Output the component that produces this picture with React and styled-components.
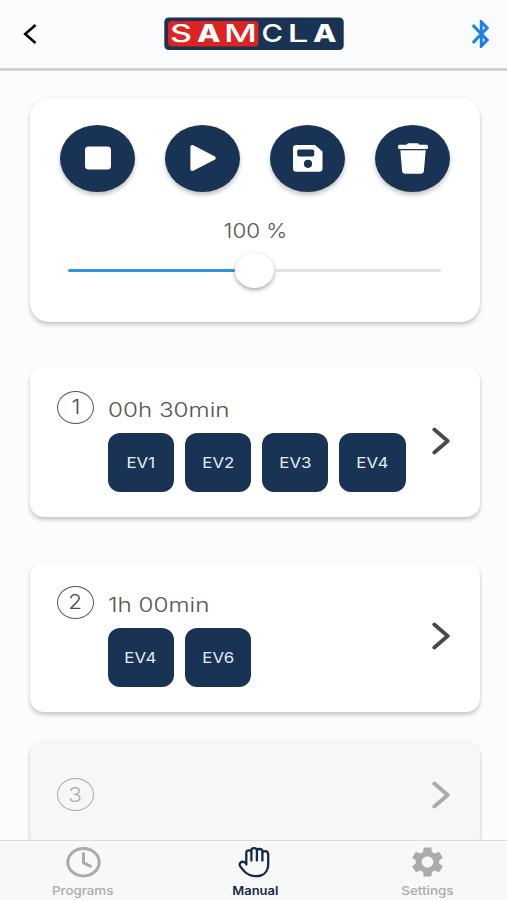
import styled, { createGlobalStyle } from "styled-components"
import { MdSettings } from "react-icons/md"

const programs = [
    { id: 1, time: "00h 30min", valves: ["EV1", "EV2", "EV3", "EV4"] },
    { id: 2, time: "1h 00min", valves: ["EV4", "EV6"] },
    { id: 3, valves: [] },
]

export default function App() {
    return (
        <PageContainer>
            <GlobalStyle />
            <Header>
                <BackIcon />
                <Logo />
                <BluetoothIcon />
            </Header>

            <Content>
                <ControlsCard>
                    <ButtonsContainer>
                        <RoundButton aria-label="stop"><StopIcon /></RoundButton>
                        <RoundButton aria-label="play"><PlayIcon /></RoundButton>
                        <RoundButton aria-label="save"><SaveIcon /></RoundButton>
                        <RoundButton aria-label="delete"><TrashIcon /></RoundButton>
                    </ButtonsContainer>
                    <Percentage><Wide $x={1.12}>100 %</Wide></Percentage>
                    <Slider>
                        <Track $filled />
                        <Thumb />
                        <Track />
                    </Slider>
                </ControlsCard>

                {programs.map(program => <ProgramCard key={program.id} program={program} />)}
            </Content>

            <TabBar>
                <Tab>
                    <ClockIcon />
                    <Wide $x={1.11}>Programs</Wide>
                </Tab>
                <Tab $active>
                    <HandIcon />
                    <Wide $x={1.08}>Manual</Wide>
                </Tab>
                <Tab>
                    <MdSettings preserveAspectRatio="none" />
                    <Wide $x={1.12}>Settings</Wide>
                </Tab>
            </TabBar>
        </PageContainer>
    )
}

function ProgramCard({ program }) {
    const empty = program.valves.length === 0
    return (
        <Card $empty={empty}>
            <Number $empty={empty}><Wide $x={1.12}>{program.id}</Wide></Number>
            <ProgramInfo>
                {program.time && <Time><Wide $x={1.21} $left>{program.time}</Wide></Time>}
                <Valves>
                    {program.valves.map(valve => (
                        <Valve key={valve}><Wide $x={1.12}>{valve}</Wide></Valve>
                    ))}
                </Valves>
            </ProgramInfo>
            <ArrowIcon />
        </Card>
    )
}

function BackIcon() {
    return (
        <svg width="14" height="20" viewBox="0 0 14 20" fill="none" stroke="#000" strokeWidth="2.5">
            <path d="M12.5 1 2.2 10l10.3 9" />
        </svg>
    )
}

function Logo() {
    return (
        <svg width="180" height="34" viewBox="0 0 180 34">
            <rect x="0.3" y="0.5" width="179.4" height="32.6" rx="4.5" fill="#183354" />
            <rect x="4" y="4" width="90.5" height="25.5" rx="4" fill="#dc231f" />
            <LogoLetters>
                <text x="6" y="25" textLength="22" lengthAdjust="spacingAndGlyphs">S</text>
                <LogoA x="33" y="25" textLength="23.5" lengthAdjust="spacingAndGlyphs">A</LogoA>
                <text x="60" y="25" textLength="33" lengthAdjust="spacingAndGlyphs">M</text>
                <text x="97.5" y="25" textLength="21.5" lengthAdjust="spacingAndGlyphs">C</text>
                <text x="123.5" y="25" textLength="21" lengthAdjust="spacingAndGlyphs">L</text>
                <LogoA x="149" y="25" textLength="23.5" lengthAdjust="spacingAndGlyphs">A</LogoA>
            </LogoLetters>
        </svg>
    )
}

function BluetoothIcon() {
    return (
        <svg width="17" height="28" viewBox="5 2 12.71 20" preserveAspectRatio="none" fill="#1b7fe3" stroke="#1b7fe3" strokeWidth="0.3">
            <path d="M17.71 7.71 12 2h-1v7.59L6.41 5 5 6.41 10.59 12 5 17.59 6.41 19 11 14.41V22h1l5.71-5.71-4.3-4.29 4.3-4.29zM13 5.83l1.88 1.88L13 9.59V5.83zm1.88 10.46L13 18.17v-3.76l1.88 1.88z" />
        </svg>
    )
}

function StopIcon() {
    return (
        <svg width="26" height="24" viewBox="0 0 26 24">
            <rect y="0.5" width="26" height="23" rx="3.5" fill="#fff" />
        </svg>
    )
}

function PlayIcon() {
    return (
        <svg width="26" height="28" viewBox="0 0 26 28" fill="#fff" stroke="#fff" strokeWidth="4" strokeLinejoin="round">
            <path d="M2.4 3v22L23.6 14z" />
        </svg>
    )
}

function SaveIcon() {
    return (
        <svg width="30" height="27" viewBox="0 0 30 27">
            <path d="M3.5 0H22l7.5 6.5v17a3.4 3.4 0 0 1-3.5 3.3H3.5A3.4 3.4 0 0 1 0 23.5v-20A3.4 3.4 0 0 1 3.5 0z" fill="#fff" />
            <rect x="4.2" y="4.5" width="17" height="7" rx="1.8" fill="#183354" />
            <circle cx="15" cy="18.8" r="4.1" fill="#183354" />
        </svg>
    )
}

function TrashIcon() {
    return (
        <svg width="30" height="31" viewBox="0 0 30 31" fill="#fff">
            <path d="M8.5 1.8Q9 0.2 10.8 0.2H19.2Q21 0.2 21.5 1.8H28.5Q30 1.8 30 3.3V4.4Q30 5.9 28.5 5.9H1.5Q0 5.9 0 4.4V3.3Q0 1.8 1.5 1.8Z" />
            <path d="M2.3 7.3H27.7L25.9 28.3Q25.6 30.7 23.2 30.7H6.8Q4.4 30.7 4.1 28.3Z" />
        </svg>
    )
}

function ArrowIcon() {
    return (
        <svg width="18" height="28" viewBox="0 0 18 28" fill="none" stroke="currentColor" strokeWidth="3.8" strokeLinecap="round" strokeLinejoin="round">
            <path d="M2.3 2.5 15.7 14 2.3 25.5" />
        </svg>
    )
}

function ClockIcon() {
    return (
        <svg viewBox="0 0 39 36" fill="none" stroke="currentColor" strokeWidth="3" strokeLinecap="round" strokeLinejoin="round">
            <ellipse cx="19.5" cy="18.2" rx="15.7" ry="13.7" />
            <path d="M19.5 9.5v9.3l6.8 3.3" />
        </svg>
    )
}

function HandIcon() {
    return (
        <svg viewBox="0 0 39 36" fill="none" stroke="currentColor" strokeWidth="2.3" strokeLinecap="round" strokeLinejoin="round">
            <path d="M10.3 20.5V8.8Q10.3 6.3 12.8 6.3T15.4 8.5V16.5M15.4 8V6.3Q15.4 4.2 18.1 4.2T20.9 6.3V16.5M20.9 7Q20.9 5 23.6 5T26.4 7.5V16.5M26.4 9Q26.8 7.2 29.3 7.2T32.2 10V19.5C32.2 27.5 27.5 32.2 20.2 32.2 14.5 32.2 11.5 30.5 8.5 27.5L4.3 22.5C2.5 19.5 5 17 8 18L10.3 19.5" />
        </svg>
    )
}

const GlobalStyle = createGlobalStyle`
    * {
        box-sizing: border-box;
    }
    body {
        margin: 0;
        background-color: #fbfcfe;
        font-family: Inter, 'Liberation Sans', sans-serif;
    }
`
const PageContainer = styled.div`
    display: flex;
    flex-direction: column;
    height: 900px;
    overflow: hidden;
`
const Header = styled.header`
    display: flex;
    justify-content: space-between;
    align-items: center;
    height: 71px;
    flex-shrink: 0;
    padding: 0 18.5px 1px 22.5px;
    border-bottom: 3px solid #d3d5d8;
`
const LogoLetters = styled.g`
    fill: #fff;
    font-family: Inter, sans-serif;
    font-size: 24px;
    font-weight: 500;
`
const LogoA = styled.text`
    font-weight: 800;
`
const Content = styled.main`
    flex: 1;
    min-height: 0;
    overflow: hidden;
    padding: 27px 27px 0 30px;
`
const ControlsCard = styled.section`
    display: flex;
    flex-direction: column;
    height: 224px;
    padding: 26.5px 30px 0;
    border-radius: 19px;
    background-color: #fff;
    box-shadow: 0 3px 4px rgba(0, 0, 0, 0.2), 0 0 3px rgba(0, 0, 0, 0.06);
`
const ButtonsContainer = styled.div`
    display: flex;
    justify-content: space-between;
`
const RoundButton = styled.button`
    display: flex;
    align-items: center;
    justify-content: center;
    width: 75px;
    height: 67px;
    padding: 0;
    border: none;
    border-radius: 50%;
    background-color: #183354;
    box-shadow: 0 3px 4px rgba(0, 0, 0, 0.24);
`
const Wide = styled.span`
    display: inline-block;
    white-space: nowrap;
    transform: scaleX(${props => props.$x});
    transform-origin: ${props => props.$left ? "left" : "center"};
`
const Percentage = styled.div`
    margin-top: 26px;
    line-height: 26px;
    font-size: 20px;
    font-weight: 300;
    text-align: center;
    color: #555;
`
const Slider = styled.div`
    display: flex;
    align-items: center;
    margin: 9.5px 9px 0 8px;
`
const Track = styled.div`
    flex: 1;
    height: 3px;
    border-radius: 2px;
    background-color: ${props => props.$filled ? "#3094dc" : "#e2e2e2"};
`
const Thumb = styled.div`
    width: 39px;
    height: 35px;
    border-radius: 50%;
    background-color: #fff;
    box-shadow: 0 2px 4px rgba(0, 0, 0, 0.35);
`
const Card = styled.section`
    display: flex;
    align-items: ${props => props.$empty ? "center" : "flex-start"};
    height: ${props => props.$empty ? "108px" : "150px"};
    padding: ${props => props.$empty ? "0" : "24px"} 30px 0 27px;
    margin-top: ${props => props.$empty ? "29px" : "44.8px"};
    border-radius: 14px;
    background-color: ${props => props.$empty ? "#f7f7f7" : "#fff"};
    color: ${props => props.$empty ? "#aaa" : "#4a4a4a"};
    box-shadow: 0 3px 4px rgba(0, 0, 0, 0.2), 0 0 3px rgba(0, 0, 0, 0.05);

    > svg {
        align-self: center;
        margin-top: ${props => props.$empty ? "0" : "-25px"};
    }
`
const Number = styled.div`
    display: flex;
    align-items: center;
    justify-content: center;
    width: 37px;
    height: 33px;
    border: ${props => props.$empty ? "1px solid #aaa" : "1.5px solid #555"};
    border-radius: 50%;
    font-size: 20px;
    font-weight: 300;
`
const ProgramInfo = styled.div`
    flex: 1;
    padding-left: 13.5px;
`
const Time = styled.div`
    padding-top: 6px;
    line-height: 26px;
    font-size: 20px;
    font-weight: 300;
    color: #555;
`
const Valves = styled.div`
    display: flex;
    gap: 10.7px;
    margin-top: 10px;
`
const Valve = styled.div`
    display: flex;
    align-items: center;
    justify-content: center;
    width: 66.5px;
    height: 59px;
    border-radius: 12px;
    background-color: #183354;
    color: #e4ecf5;
    font-size: 15px;
`
const TabBar = styled.nav`
    display: flex;
    justify-content: space-between;
    height: 60px;
    flex-shrink: 0;
    padding: 3px 40px 0 43px;
    border-top: 1px solid #dcdddd;
    background-color: #f7f8f8;
`
const Tab = styled.div`
    display: flex;
    flex-direction: column;
    align-items: center;
    width: 80px;
    font-size: 12px;
    font-weight: ${props => props.$active ? 600 : 500};
    line-height: 16px;
    color: ${props => props.$active ? "#132a48" : "#aaabac"};

    svg {
        width: 39px;
        height: 36px;
        margin-bottom: 3px;
    }
`
